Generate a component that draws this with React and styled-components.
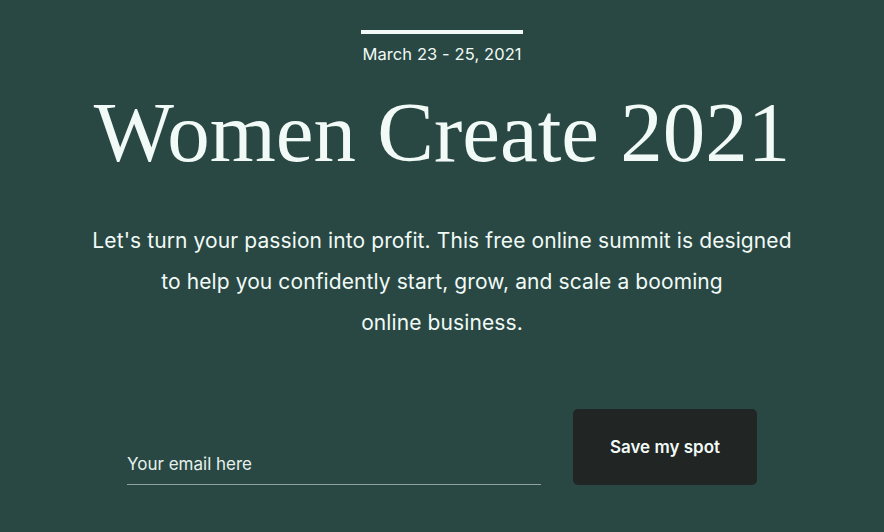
import React from 'react';
import styled, { createGlobalStyle } from 'styled-components';

const GlobalStyle = createGlobalStyle`
	html, body {
		margin: 0;
		padding: 0;
		background: #294843;
	}
	body {
		font-family: Inter, "Liberation Sans", sans-serif;
		color: #f1faf6;
	}
`;

const Page = styled.div`
	width: 884px;
	height: 532px;
	overflow: hidden;
	display: flex;
	flex-direction: column;
	align-items: center;
	padding-top: 30px;
	box-sizing: border-box;
`;

const Rule = styled.div`
	width: 162px;
	height: 4px;
	background: #f1faf6;
`;

const DateLine = styled.div`
	margin-top: 10px;
	font-size: 16.5px;
	line-height: 20px;
	letter-spacing: 0.1px;
`;

const Title = styled.h1`
	margin: 18px 0 0;
	font-family: "Liberation Serif", serif;
	font-weight: 400;
	font-size: 85px;
	line-height: 100px;
`;

const Lead = styled.p`
	margin: 38px 0 0;
	font-size: 21px;
	line-height: 41px;
	letter-spacing: 0.1px;
	text-align: center;
`;

const Form = styled.form`
	margin-top: 66px;
	display: flex;
	align-items: flex-end;
	gap: 32px;
`;

const EmailInput = styled.input`
	width: 414px;
	background: transparent;
	border: none;
	border-bottom: 1px solid #8fa39d;
	padding: 0 0 10px;
	font-family: Inter, "Liberation Sans", sans-serif;
	font-size: 17px;
	color: #f1faf6;
	outline: none;
	&::placeholder {
		color: #e6f0ec;
	}
`;

const SaveButton = styled.button`
	width: 184px;
	height: 76px;
	background: #212524;
	border: none;
	border-radius: 5px;
	color: #f1faf6;
	font-family: Inter, "Liberation Sans", sans-serif;
	font-size: 17px;
	font-weight: 600;
	cursor: pointer;
`;

const App = () => {
	return (
		<Page>
			<GlobalStyle />
			<Rule />
			<DateLine>March 23 - 25, 2021</DateLine>
			<Title>Women Create 2021</Title>
			<Lead>
				Let's turn your passion into profit. This free online summit is designed<br />
				to help you confidently start, grow, and scale a booming<br />
				online business.
			</Lead>
			<Form onSubmit={e => e.preventDefault()}>
				<EmailInput type="email" placeholder="Your email here" />
				<SaveButton type="submit">Save my spot</SaveButton>
			</Form>
		</Page>
	);
}

export default App;
